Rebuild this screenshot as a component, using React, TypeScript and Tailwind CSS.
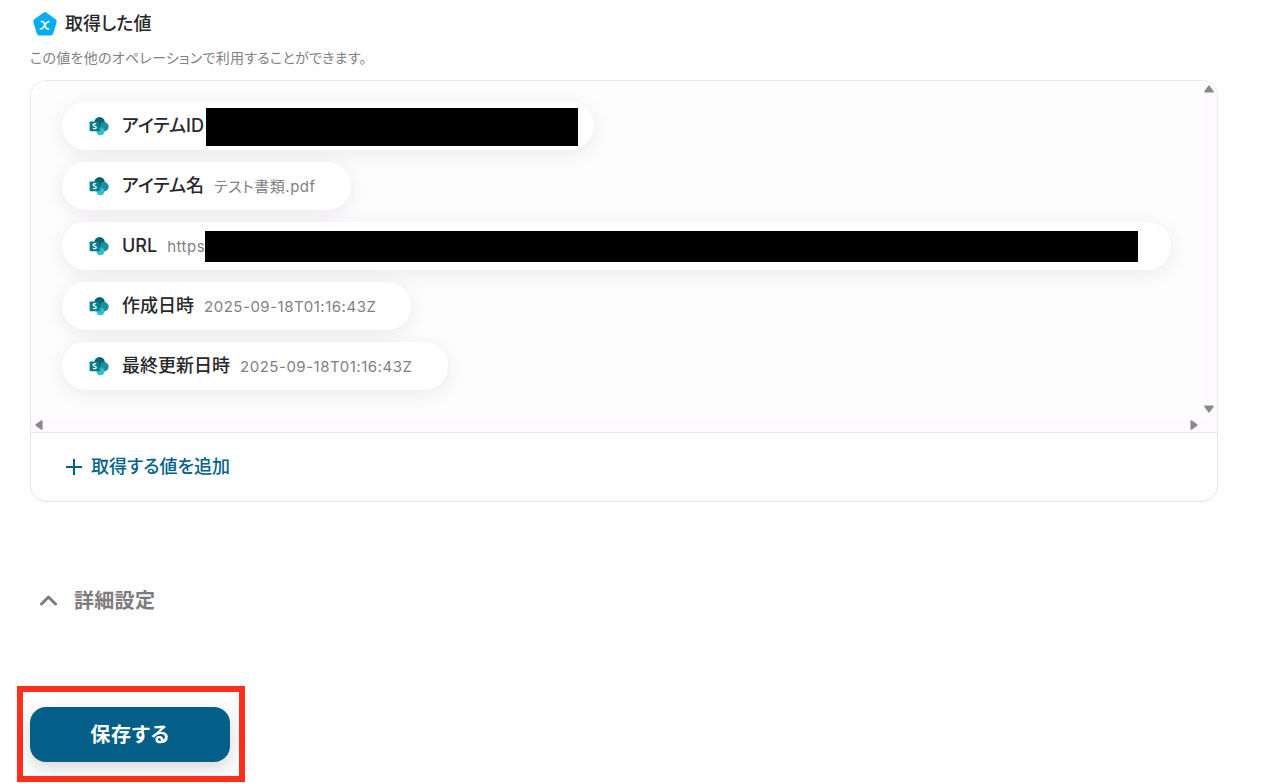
import React from "react";

interface ValueItem {
  label: string;
  value: string;
  width: string;
  mask?: string;
}

const items: ValueItem[] = [
  {
    label: "アイテムID",
    value: "",
    width: "w-[532px]",
    mask: "left-[144px] top-[6px] h-[38px] w-[372px]",
  },
  { label: "アイテム名", value: "テスト書類.pdf", width: "w-[289px]" },
  {
    label: "URL",
    value: "https",
    width: "w-[1109px]",
    mask: "left-[143px] top-[9px] h-[31px] w-[933px]",
  },
  { label: "作成日時", value: "2025-09-18T01:16:43Z", width: "w-[349px]" },
  { label: "最終更新日時", value: "2025-09-18T01:16:43Z", width: "w-[386px]" },
];

const SharePointIcon: React.FC = () => (
  <svg viewBox="0 0 20 20" className="h-5 w-5 shrink-0">
    <circle cx="10.6" cy="6.3" r="5.2" fill="#03666f" />
    <circle cx="15" cy="10.7" r="4.7" fill="#1a8f9f" />
    <circle cx="11.4" cy="15.3" r="3.9" fill="#35bdd3" />
    <path d="M7 5.5h4.6v9.4H8.1A5 5 0 0 1 7 12z" fill="#024a55" opacity="0.35" />
    <rect x="0.6" y="5.4" width="9.8" height="9.8" rx="0.8" fill="#057f8c" />
    <path
      d="M7.2 8.1C6.8 7.8 6.2 7.7 5.7 7.7c-.9 0-1.5.5-1.5 1.2 0 1.6 3 .9 3 2.5 0 .8-.6 1.3-1.6 1.3-.6 0-1.1-.2-1.5-.5"
      fill="none"
      stroke="#fff"
      strokeWidth="1.3"
    />
  </svg>
);

const VariableIcon: React.FC = () => (
  <svg viewBox="0 0 26 26" className="h-[26px] w-[26px] shrink-0">
    <path
      d="M11.4 1.7a2.7 2.7 0 0 1 3.2 0l9 6.6a2.7 2.7 0 0 1 1 3l-3.4 11.3a2.7 2.7 0 0 1-2.6 1.9H7.4a2.7 2.7 0 0 1-2.6-1.9L1.4 11.3a2.7 2.7 0 0 1 1-3z"
      fill="#00adf5"
    />
    <path
      d="M9.4 10.6c1.6-.4 2.3.2 2.8 1.5l1.7 4.4c.5 1.3 1.2 1.8 2.7 1.4M17 10.6c-1.1-.1-1.8.5-2.6 1.5l-3.4 4.5c-.7 1-1.4 1.5-2.5 1.3"
      fill="none"
      stroke="#fff"
      strokeWidth="1.6"
      strokeLinecap="round"
    />
  </svg>
);

const Arrow: React.FC<{ className: string }> = ({ className }) => (
  <svg viewBox="0 0 10 8" className={`absolute h-2 w-2.5 ${className}`}>
    <path
      d="M5 1.2 9 6.8H1z"
      fill="#8a888b"
      stroke="#8a888b"
      strokeWidth="1.6"
      strokeLinejoin="round"
    />
  </svg>
);

const ValuePill: React.FC<{ item: ValueItem }> = ({ item }) => (
  <div
    className={`relative flex h-12 items-center rounded-full bg-white pl-[27px] shadow-[0_4px_20px_rgba(40,25,50,0.09)] ${item.width}`}
  >
    <SharePointIcon />
    <span className="ml-[13px] text-[18px] leading-6 font-medium whitespace-nowrap text-[#29272a]">
      {item.label}
    </span>
    {item.value && (
      <span className="ml-2.5 pt-px text-[15px] leading-6 tracking-[0.52px] whitespace-nowrap text-[#828083]">
        {item.value}
      </span>
    )}
    {item.mask && <div className={`absolute bg-black ${item.mask}`} />}
  </div>
);

export default function App() {
  return (
    <div className="h-[783px] w-[1288px] overflow-hidden bg-[#fefefe] pl-[30px] font-['Inter','Noto_Sans_CJK_JP',sans-serif] [font-feature-settings:'palt']">
      {/* Heading */}
      <div className="flex h-9 items-center gap-[7px] pt-3 pl-0.5">
        <VariableIcon />
        <h2 className="text-[18px] leading-6 font-medium text-[#29272a]">
          取得した値
        </h2>
      </div>
      <p className="mt-3 text-[14px] leading-5 tracking-[0.28px] text-[#828083]">
        この値を他のオペレーションで利用することができます。
      </p>

      {/* Values */}
      <div className="mt-3 h-[422px] w-[1188px] overflow-hidden rounded-2xl border border-[#e8e6e9]">
        <div className="relative h-[352px] border-b border-[#e8e6e9] bg-[#fcfafd]">
          <div className="h-[338px] w-[1173px] overflow-hidden bg-[#fefdfe] pt-[21px] pl-[31px]">
            <div className="flex flex-col gap-3">
              {items.map((item) => (
                <ValuePill key={item.label} item={item} />
              ))}
            </div>
          </div>
          <Arrow className="top-1 right-[3px]" />
          <Arrow className="right-[3px] bottom-[19px] rotate-180" />
          <Arrow className="bottom-[3px] left-[3px] -rotate-90" />
          <Arrow className="right-[18px] bottom-[3px] rotate-90" />
        </div>
        <button className="flex h-[68px] items-center gap-2 pl-[35px] text-[18px] leading-6 font-medium text-[#03628a]">
          <svg viewBox="0 0 16 16" className="mr-px h-4 w-4">
            <path d="M8 0v16M0 8h16" stroke="currentColor" strokeWidth="2" />
          </svg>
          取得する値を追加
        </button>
      </div>

      {/* Advanced settings */}
      <button className="mt-[84px] flex h-[30px] items-center gap-[17px] pl-[9px] text-[20px] leading-[30px] font-bold tracking-[0.3px] text-[#7d7b7e]">
        <svg viewBox="0 0 18 12" className="mb-0.5 h-3 w-[18px]">
          <path
            d="M2.5 10 9.5 3l7 7"
            fill="none"
            stroke="currentColor"
            strokeWidth="3"
            strokeLinecap="round"
            strokeLinejoin="round"
          />
        </svg>
        詳細設定
      </button>

      {/* Save */}
      <div className="mt-[70px] -ml-[13px] h-24 w-[228px] border-6 border-[#ff2f1c] pt-[15px] pl-[7px]">
        <button className="h-[55px] w-[200px] rounded-2xl bg-[#035f87] pt-px text-[20px] font-bold tracking-[0.8px] text-white shadow-[0_6px_16px_rgba(40,25,50,0.18)]">
          保存する
        </button>
      </div>
    </div>
  );
}
